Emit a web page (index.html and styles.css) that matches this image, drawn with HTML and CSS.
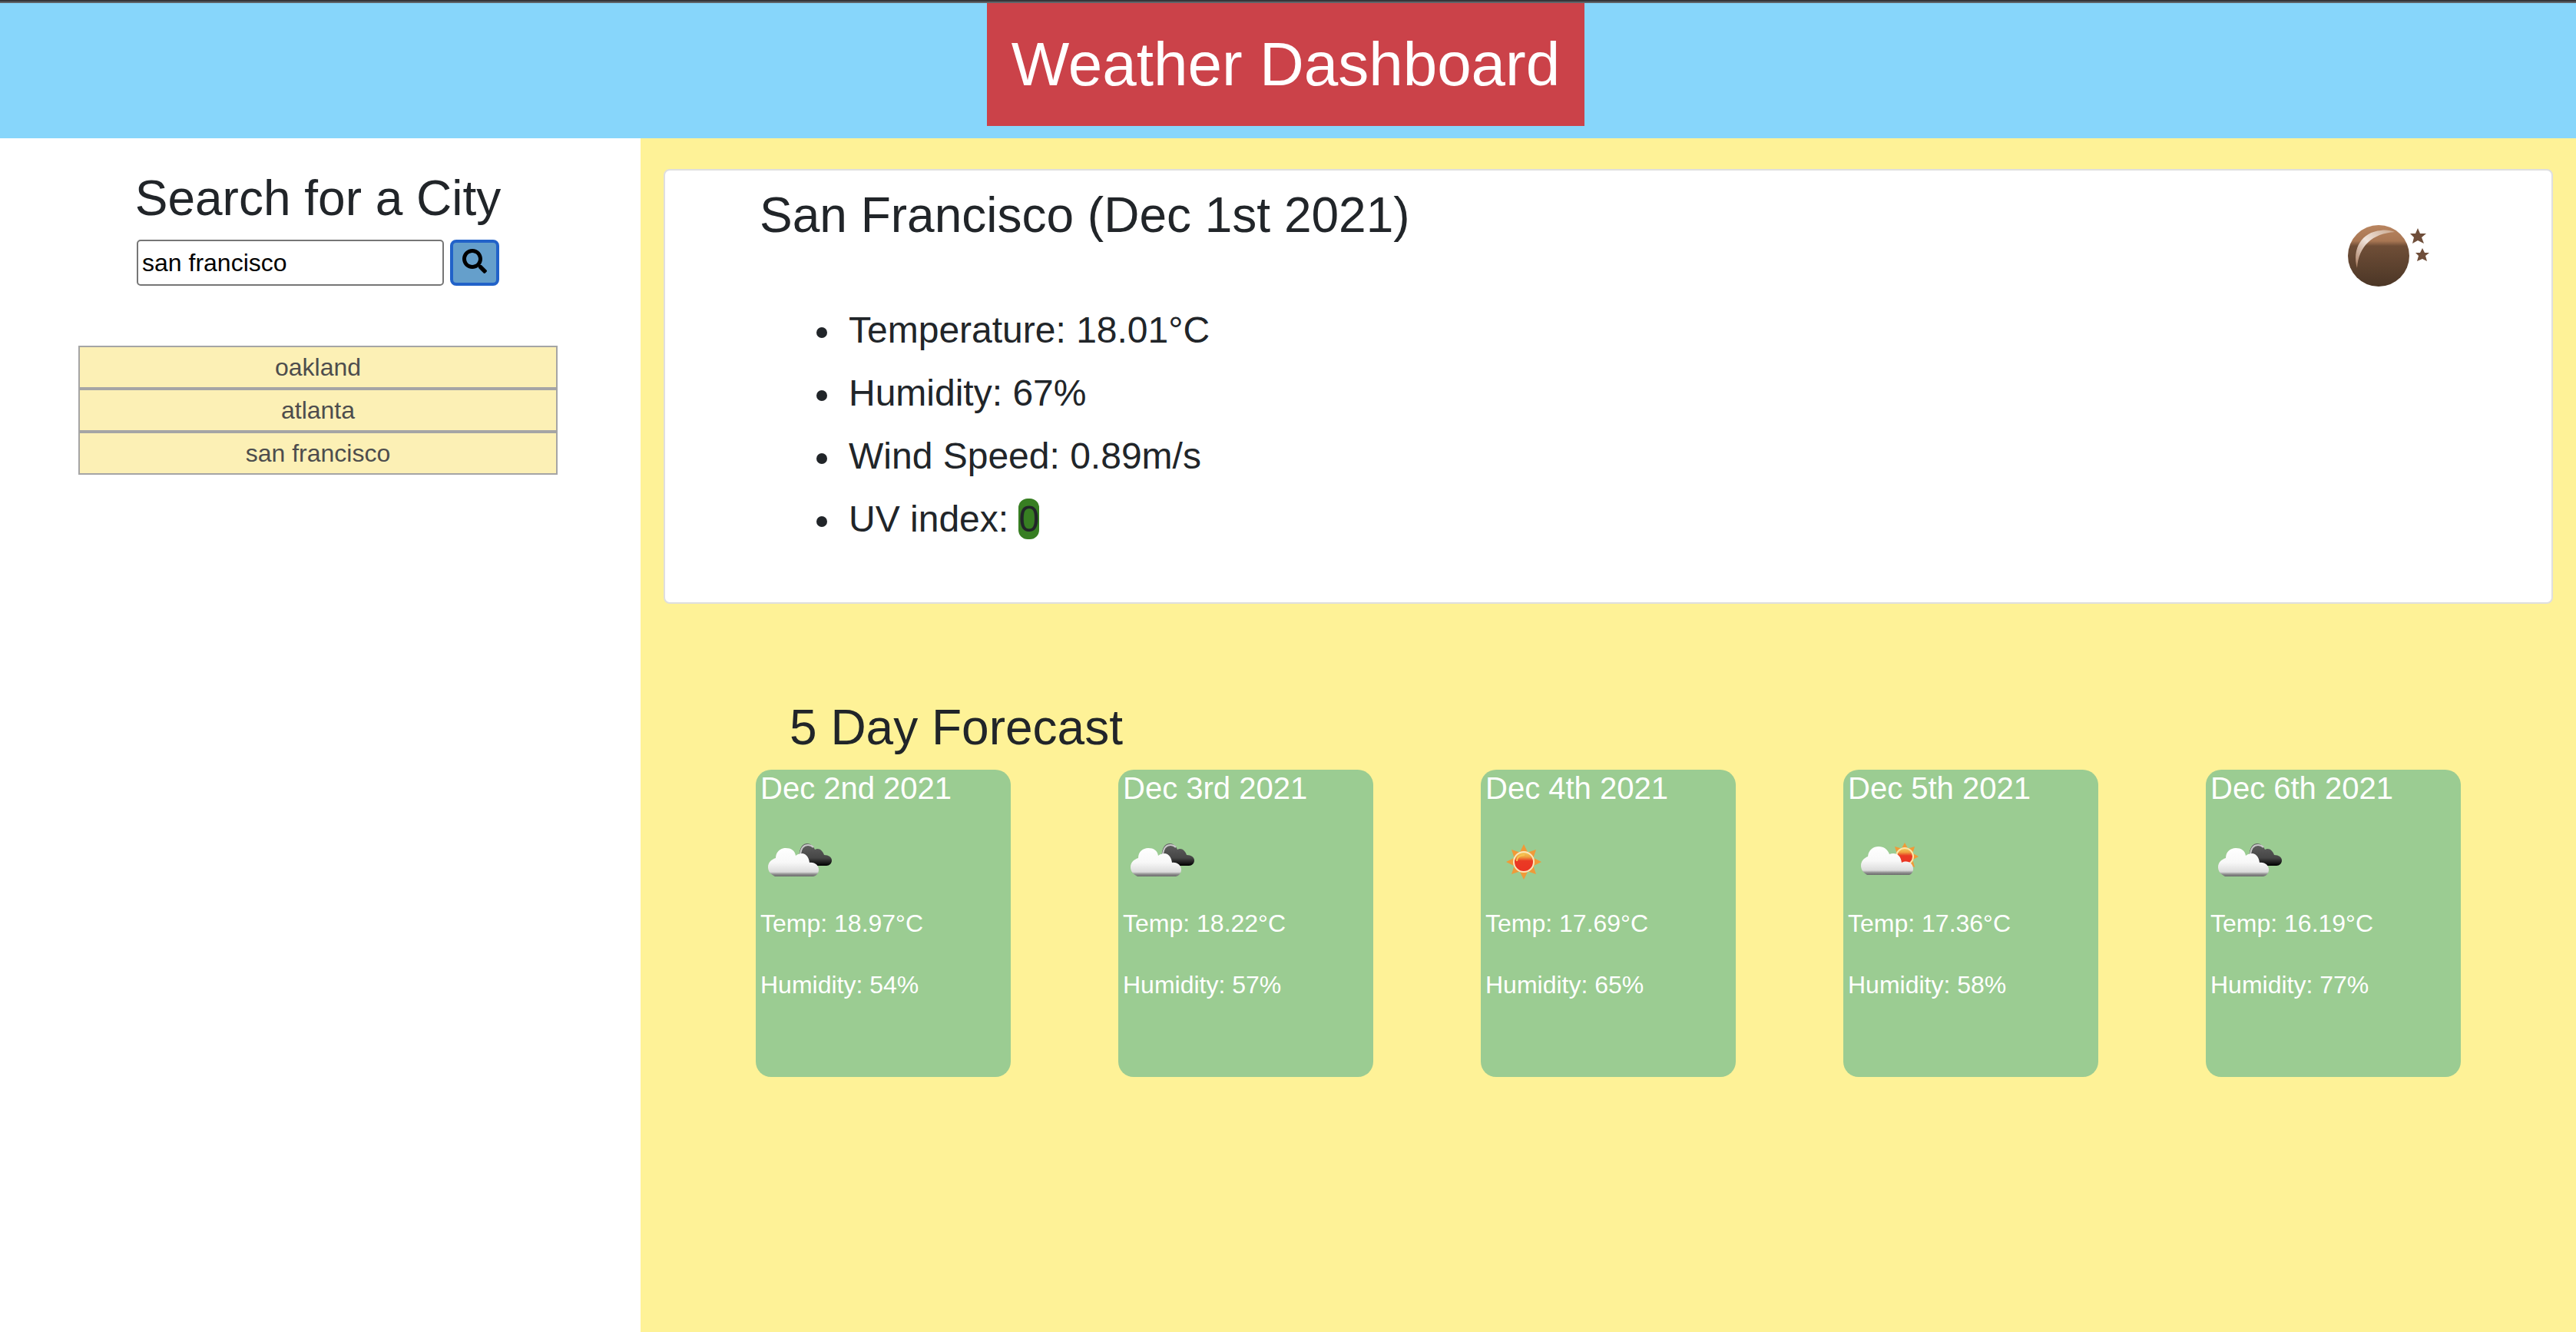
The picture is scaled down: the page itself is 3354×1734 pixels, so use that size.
FILE: index.html
```html
<!DOCTYPE html>
<html lang="en">
<head>
<meta charset="utf-8">
<title>Weather Dashboard</title>
<link rel="stylesheet" href="styles.css">
</head>
<body>
<svg class="defs" width="0" height="0" aria-hidden="true">
  <defs>
    <linearGradient id="white-cloud" x1="0" y1="0" x2="0" y2="1">
      <stop offset="0" stop-color="#fff"/>
      <stop offset=".5" stop-color="#f8f8f8"/>
      <stop offset=".84" stop-color="#dcdcdc"/>
      <stop offset=".92" stop-color="#8e8e8e"/>
      <stop offset="1" stop-color="#6c6c6c"/>
    </linearGradient>
    <linearGradient id="dark-cloud" x1="0" y1="0" x2="0" y2="1">
      <stop offset="0" stop-color="#606060"/>
      <stop offset=".65" stop-color="#464646"/>
      <stop offset="1" stop-color="#000"/>
    </linearGradient>
    <linearGradient id="sun-disc" x1="0" y1="0" x2="0" y2="1">
      <stop offset="0" stop-color="#f6cf5c"/>
      <stop offset=".25" stop-color="#f0a040"/>
      <stop offset=".45" stop-color="#ea3a24"/>
      <stop offset="1" stop-color="#ea3323"/>
    </linearGradient>
    <linearGradient id="moon-disc" x1="0" y1="0" x2="0" y2="1">
      <stop offset="0" stop-color="#b98560"/>
      <stop offset=".26" stop-color="#a87653"/>
      <stop offset=".34" stop-color="#6f4e37"/>
      <stop offset="1" stop-color="#4b3626"/>
    </linearGradient>
    <linearGradient id="moon-shine" x1="0" y1="1" x2="1" y2="0">
      <stop offset="0" stop-color="#a87a5c"/>
      <stop offset=".5" stop-color="#f0e4dc"/>
      <stop offset="1" stop-color="#c9a68c"/>
    </linearGradient>
    <symbol id="broken-clouds" viewBox="0 0 100 100">
      <path fill="url(#dark-cloud)" d="M47 52C49 50 50 47 51 44C52 36 56 32 61 32C65 32 69 35 71 40C76 37 81 41 83 47C89 47 93 50 93 54C93 58 90 61 86 61H60Z"/>
      <path fill="none" stroke="#c9c9c9" stroke-width="2" d="M52 46C53 38 57 34 62 34C65 34 67 35 69 37"/>
      <path fill="url(#white-cloud)" d="M19 75C13 72 10 68 10 63C10 57 14 53 20 51C20 43 26 38 33 38C40 38 45 41 46 48C48 46 51 45 55 45C60 46 63 50 64 57C71 56 76 61 76 66C76 71 73 74 69 75Z"/>
    </symbol>
    <symbol id="clear-day" viewBox="0 0 100 100">
      <path fill="#f09a38" d="M50 33L56 45H44ZM50 79L44 67H56ZM27 56L39 50V62ZM73 56L61 62V50ZM34 40L46 44L38 52ZM66 40L62 52L54 44ZM34 72L38 60L46 68ZM66 72L54 68L62 60Z"/>
      <circle cx="50" cy="56" r="13" fill="url(#sun-disc)" stroke="#fbe6b8" stroke-width="2"/>
      <path fill="none" stroke="#f7c350" stroke-width="2" d="M41 55C41 50 45 47 51 47"/>
    </symbol>
    <symbol id="few-clouds" viewBox="0 0 100 100">
      <path fill="#f09a38" d="M74 31L79 40H69ZM92 49L83 54V44ZM61 36L71 39L64 46ZM87 36L84 46L77 39ZM87 63L77 59L84 52Z"/>
      <circle cx="74" cy="49" r="11" fill="url(#sun-disc)" stroke="#fbe6a8" stroke-width="2"/>
      <path fill="url(#white-cloud)" d="M25 73C20 70 17 66 17 61C17 55 21 51 26 49C27 40 33 36 40 36C47 36 52 40 54 46C61 43 69 46 70 57C78 53 85 58 85 65C85 69 83 72 80 73Z"/>
    </symbol>
    <symbol id="clear-night" viewBox="0 0 160 160">
      <circle cx="58" cy="91" r="40" fill="url(#moon-disc)"/>
      <path fill="url(#moon-shine)" d="M30 107C23 82 36 60 61 58C68 57 74 58 79 60C50 62 32 78 30 107Z"/>
      <path fill="#6f4e3a" d="M109 55L112 62L120 62L114 67L117 75L109 71L102 75L104 67L99 62L106 62ZM115 81L118 87L124 87L119 91L121 98L115 95L108 98L110 91L106 87L112 87Z"/>
    </symbol>
  </defs>
</svg>

<div class="page">
  <header class="banner">
    <h1 class="banner-title">Weather Dashboard</h1>
  </header>
  <div class="layout">
    <aside class="sidebar">
      <h2 class="heading"><label for="city">Search for a City</label></h2>
      <form class="search">
        <input class="search-input" id="city" type="text" value="san francisco">
        <button class="search-button" type="button" aria-label="Search">
          <svg class="search-icon" viewBox="0 0 512 512" aria-hidden="true"><path d="M505 442.700L405.300 343c-4.500-4.500-10.600-7-17-7H372c27.600-35.300 44-79.700 44-128C416 93.100 322.900 0 208 0S0 93.100 0 208s93.100 208 208 208c48.300 0 92.700-16.400 128-44v16.300c0 6.400 2.500 12.500 7 17l99.700 99.700c9.400 9.400 24.600 9.400 33.900 0l28.300-28.300c9.400-9.400 9.400-24.600.1-34zM208 336c-70.700 0-128-57.200-128-128 0-70.700 57.200-128 128-128 70.700 0 128 57.200 128 128 0 70.700-57.200 128-128 128z"/></svg>
        </button>
      </form>
      <div class="history">
        <button class="history-item" type="button">oakland</button>
        <button class="history-item" type="button">atlanta</button>
        <button class="history-item" type="button">san francisco</button>
      </div>
    </aside>
    <main class="content">
      <section class="current">
        <div>
          <h2 class="heading">San Francisco (Dec 1st 2021)</h2>
          <ul class="readings">
            <li>Temperature: 18.01°C</li>
            <li>Humidity: 67%</li>
            <li>Wind Speed: 0.89m/s</li>
            <li>UV index: <span class="uv-low">0</span></li>
          </ul>
        </div>
        <svg class="current-icon" aria-hidden="true"><use href="#clear-night"/></svg>
      </section>
      <section class="forecast">
        <h2 class="heading forecast-heading">5 Day Forecast</h2>
        <div class="days">
          <article class="day">
            <h3 class="day-date">Dec 2nd 2021</h3>
            <svg class="day-icon" aria-hidden="true"><use href="#broken-clouds"/></svg>
            <p class="day-text">Temp: 18.97°C</p>
            <p class="day-text">Humidity: 54%</p>
          </article>
          <article class="day">
            <h3 class="day-date">Dec 3rd 2021</h3>
            <svg class="day-icon" aria-hidden="true"><use href="#broken-clouds"/></svg>
            <p class="day-text">Temp: 18.22°C</p>
            <p class="day-text">Humidity: 57%</p>
          </article>
          <article class="day">
            <h3 class="day-date">Dec 4th 2021</h3>
            <svg class="day-icon" aria-hidden="true"><use href="#clear-day"/></svg>
            <p class="day-text">Temp: 17.69°C</p>
            <p class="day-text">Humidity: 65%</p>
          </article>
          <article class="day">
            <h3 class="day-date">Dec 5th 2021</h3>
            <svg class="day-icon" aria-hidden="true"><use href="#few-clouds"/></svg>
            <p class="day-text">Temp: 17.36°C</p>
            <p class="day-text">Humidity: 58%</p>
          </article>
          <article class="day">
            <h3 class="day-date">Dec 6th 2021</h3>
            <svg class="day-icon" aria-hidden="true"><use href="#broken-clouds"/></svg>
            <p class="day-text">Temp: 16.19°C</p>
            <p class="day-text">Humidity: 77%</p>
          </article>
        </div>
      </section>
    </main>
  </div>
</div>
</body>
</html>
```
FILE: styles.css
```css
* {
  box-sizing: border-box;
}

body {
  margin: 0;
  background: #fff;
  color: #212529;
  font-family: "Liberation Sans", Arial, sans-serif;
  font-size: 32px;
  line-height: 48px;
}

.defs {
  position: absolute;
}

h1,
h2,
h3,
p,
ul {
  margin: 0;
  font-weight: 400;
}

.page {
  display: flex;
  flex-direction: column;
  min-height: 100vh;
  margin-left: -6px;
  border-top: 2px solid #35363a;
}

.banner {
  display: flex;
  justify-content: center;
  padding-bottom: 16px;
  border-top: 2px solid #5f6368;
  background: #87d6fb;
}

.banner-title {
  padding: 32px;
  background: #cb4249;
  color: #fff;
  font-size: 80px;
  line-height: 96px;
}

.layout {
  display: grid;
  flex: 1;
  grid-template-columns: 1fr 3fr;
}

.heading {
  font-size: 64px;
  line-height: 77px;
}

/* Search column */

.sidebar {
  display: flex;
  flex-direction: column;
  align-items: center;
  padding: 40px 30px;
}

.search {
  display: flex;
  gap: 8px;
  margin-top: 15px;
}

.search-input {
  width: 400px;
  height: 60px;
  padding: 2px 5px;
  border: 2px solid #767676;
  border-radius: 5px;
  background: #fff;
  color: #000;
  font: inherit;
}

.search-button {
  width: 64px;
  height: 60px;
  padding: 0 0 4px;
  border: 4px solid #2162c9;
  border-radius: 8px;
  background: #659fcb;
  color: #000;
}

.search-icon {
  display: block;
  width: 32px;
  height: 32px;
  margin: 0 auto;
  fill: currentColor;
}

.history {
  display: flex;
  flex-direction: column;
  width: 80%;
  margin-top: 78px;
}

.history-item {
  height: 56px;
  padding: 0;
  border: 2px solid #a5a5a5;
  background: #fcf0b5;
  color: #4d4d4d;
  font: inherit;
}

/* Weather column */

.content {
  padding: 40px 30px;
  background: #fef297;
}

.current {
  display: flex;
  justify-content: space-between;
  padding: 20px 5% 67px;
  border: 2px solid #dfdfdf;
  border-radius: 8px;
  background: #fff;
}

.current-icon {
  width: 160px;
  height: 160px;
}

.readings {
  margin-top: 70px;
  padding-left: 116px;
  font-size: 48px;
  line-height: 72px;
  list-style: none;
}

.readings li {
  padding: 5px 0;
}

.readings li::before {
  content: "";
  display: inline-block;
  width: 14px;
  height: 14px;
  margin: 0 28px 0 -42px;
  border-radius: 50%;
  background: currentColor;
  vertical-align: middle;
}

.uv-low {
  border-radius: 12px;
  background: #377e22;
}

.forecast {
  padding: 123px 120px 0;
}

.forecast-heading {
  padding-left: 44px;
}

.days {
  display: grid;
  grid-template-columns: repeat(5, 1fr);
  gap: 140px;
  margin-top: 16px;
}

.day {
  min-height: 400px;
  padding: 0 6px;
  border-radius: 20px;
  background: #9bcc92;
  color: #fff;
}

.day-date {
  font-size: 40px;
  line-height: 48px;
}

.day-icon {
  display: block;
  width: 100px;
  height: 100px;
  margin: 16px 0 12px;
}

.day-text {
  margin-bottom: 32px;
}
```
